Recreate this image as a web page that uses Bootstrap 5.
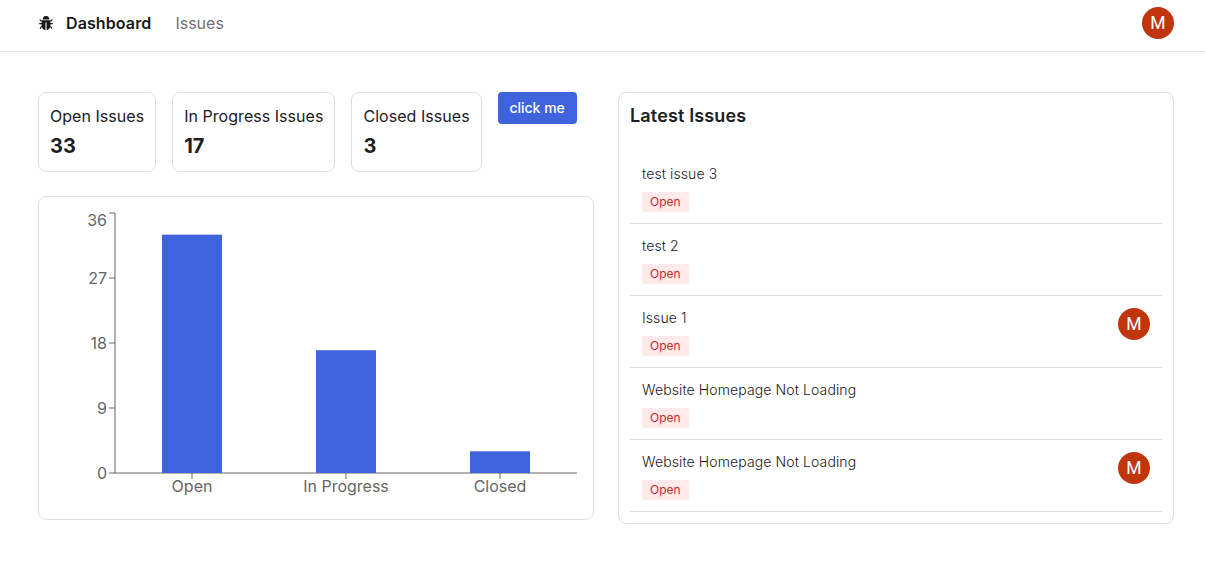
<!DOCTYPE html>
<html lang="en">
<head>
<meta charset="utf-8">
<meta name="viewport" content="width=device-width, initial-scale=1">
<title>Issue Tracker</title>
<link href="https://cdn.jsdelivr.net/npm/bootstrap@5.3.0/dist/css/bootstrap.min.css" rel="stylesheet">
<style>
  body { font-family: Inter, "Open Sans", sans-serif; color: #1c2024; font-size: 16px; line-height: 24px; }
  .topbar { height: 52px; padding: 7px 31px 0 38px; border-bottom: 1px solid #e5e7eb; }
  .topbar-links { gap: 12px; height: 32px; }
  .topbar a { color: #71717a; text-decoration: none; letter-spacing: .02px; }
  .topbar a.current { color: #18181b; font-weight: 600; margin-right: 12px; letter-spacing: .11px; }
  .page { padding: 40px 31px 0 38px; display: grid; grid-template-columns: 556px 556px; gap: 24px; }
  .panel { border: 1px solid #dddee3; border-radius: 8px; }
  .stat { height: 80px; padding: 11px; }
  .stat-label { white-space: nowrap; letter-spacing: .04px; }
  .stat-value { font-size: 20px; font-weight: 700; line-height: 28px; margin-top: 4px; }
  .btn-click { height: 32px; width: 79px; padding: 0; font-size: 14px; font-weight: 500; line-height: 20px; border: 0; border-radius: 4px; background: #3e63dd; color: #fff; }
  .btn-click:hover { background: #3a5ccc; color: #fff; }
  .chart-panel { height: 324px; padding: 11px; margin-top: 24px; }
  .chart-panel text { fill: #666; font-size: 16px; }
  .axis { stroke: #666; fill: none; }
  .latest { height: 432px; padding: 11px; }
  .latest h1 { font-size: 18px; font-weight: 600; line-height: 24px; margin: 0 0 24px; letter-spacing: .15px; }
  .issue { height: 72px; padding: 12px; border-bottom: 1px solid #dddee3; }
  .issue-title { font-size: 14px; line-height: 20px; color: #1c2024; font-weight: 300; letter-spacing: .11px; }
  .tag-open { width: max-content; background: #ffe9e9; color: #c62a2f; font-size: 12px; line-height: 16px; padding: 2px 8px; border-radius: 3px; }
  .avatar { width: 32px; height: 32px; background: #c0350c; color: #fff; font-family: Roboto, sans-serif; font-size: 17.5px; line-height: 33px; text-align: center; }
</style>
</head>
<body class="bg-white">
<nav class="topbar d-flex justify-content-between align-items-start">
  <div class="topbar-links d-flex align-items-center">
    <svg width="16" height="16" viewBox="0 0 1024 1024" fill="#18181b" aria-hidden="true">
      <path d="M304 280h416c4 0 8-4 8-8C728 150 640 64 532 64h-40C384 64 296 150 296 272c0 4 4 8 8 8z"/>
      <path d="M940 512H792V412c76.800 0 139-62.200 139-139 0-4.400-3.600-8-8-8h-60c-4.400 0-8 3.600-8 8 0 34.800-28.200 63-63 63H232c-34.800 0-63-28.200-63-63 0-4.400-3.600-8-8-8h-60c-4.400 0-8 3.600-8 8 0 76.800 62.200 139 139 139v100H84c-4.400 0-8 3.600-8 8v56c0 4.400 3.600 8 8 8h148v96c0 6.500.2 13 .7 19.300C164.100 728.600 116 796.700 116 876c0 4.400 3.600 8 8 8h56c4.400 0 8-3.600 8-8 0-44.200 23.900-82.900 59.600-103.700C275 850 310 895 371 922c29 16 61 28 95 34 5 0 10-3 10-8V484c0-4.400 3.600-8 8-8h56c4.400 0 8 3.600 8 8v464c0 5 5 8 10 8 34-6 66-18 95-34 61-27 96-72 123.400-149.700C812.100 793.100 836 831.800 836 876c0 4.400 3.600 8 8 8h56c4.400 0 8-3.600 8-8 0-79.300-48.100-147.400-116.700-176.700.4-6.400.7-12.800.7-19.300v-96h148c4.400 0 8-3.600 8-8v-56c0-4.400-3.600-8-8-8z"/>
    </svg>
    <a class="current" href="#">Dashboard</a>
    <a href="#">Issues</a>
  </div>
  <div class="avatar rounded-circle">M</div>
</nav>
<main class="page">
  <section>
    <div class="d-flex gap-3 align-items-start">
      <div class="panel stat"><div class="stat-label">Open Issues</div><div class="stat-value">33</div></div>
      <div class="panel stat"><div class="stat-label">In Progress Issues</div><div class="stat-value">17</div></div>
      <div class="panel stat"><div class="stat-label">Closed Issues</div><div class="stat-value">3</div></div>
      <button class="btn btn-click" type="button">click me</button>
    </div>
    <div class="panel chart-panel">
      <svg class="d-block" width="532" height="300" viewBox="0 0 532 300" role="img" aria-label="Issues by status">
        <path class="axis" d="M65 265H527M142 265V271M296 265V271M450 265V271"/>
        <path class="axis" d="M65 5V265M59 265H65M59 200H65M59 135H65M59 70H65M59 5H65"/>
        <g text-anchor="end">
          <text x="57" y="271">0</text><text x="57" y="206">9</text><text x="57" y="141">18</text><text x="57" y="76">27</text><text x="57" y="18">36</text>
        </g>
        <g text-anchor="middle">
          <text x="142" y="284">Open</text><text x="296" y="284">In Progress</text><text x="450" y="284">Closed</text>
        </g>
        <g fill="#3e63dd">
          <rect x="112" y="26.670" width="60" height="238.330"/>
          <rect x="266" y="142.220" width="60" height="122.780"/>
          <rect x="420" y="243.330" width="60" height="21.670"/>
        </g>
      </svg>
    </div>
  </section>
  <section class="panel latest">
    <h1>Latest Issues</h1>
    <div>
      <div class="issue d-flex justify-content-between"><div><div class="issue-title mb-2">test issue 3</div><div class="tag-open">Open</div></div></div>
      <div class="issue d-flex justify-content-between"><div><div class="issue-title mb-2">test 2</div><div class="tag-open">Open</div></div></div>
      <div class="issue d-flex justify-content-between"><div><div class="issue-title mb-2">Issue 1</div><div class="tag-open">Open</div></div><div class="avatar rounded-circle">M</div></div>
      <div class="issue d-flex justify-content-between"><div><div class="issue-title mb-2">Website Homepage Not Loading</div><div class="tag-open">Open</div></div></div>
      <div class="issue d-flex justify-content-between"><div><div class="issue-title mb-2">Website Homepage Not Loading</div><div class="tag-open">Open</div></div><div class="avatar rounded-circle">M</div></div>
    </div>
  </section>
</main>
<script src="https://cdn.jsdelivr.net/npm/bootstrap@5.3.0/dist/js/bootstrap.bundle.min.js"></script>
</body>
</html>
